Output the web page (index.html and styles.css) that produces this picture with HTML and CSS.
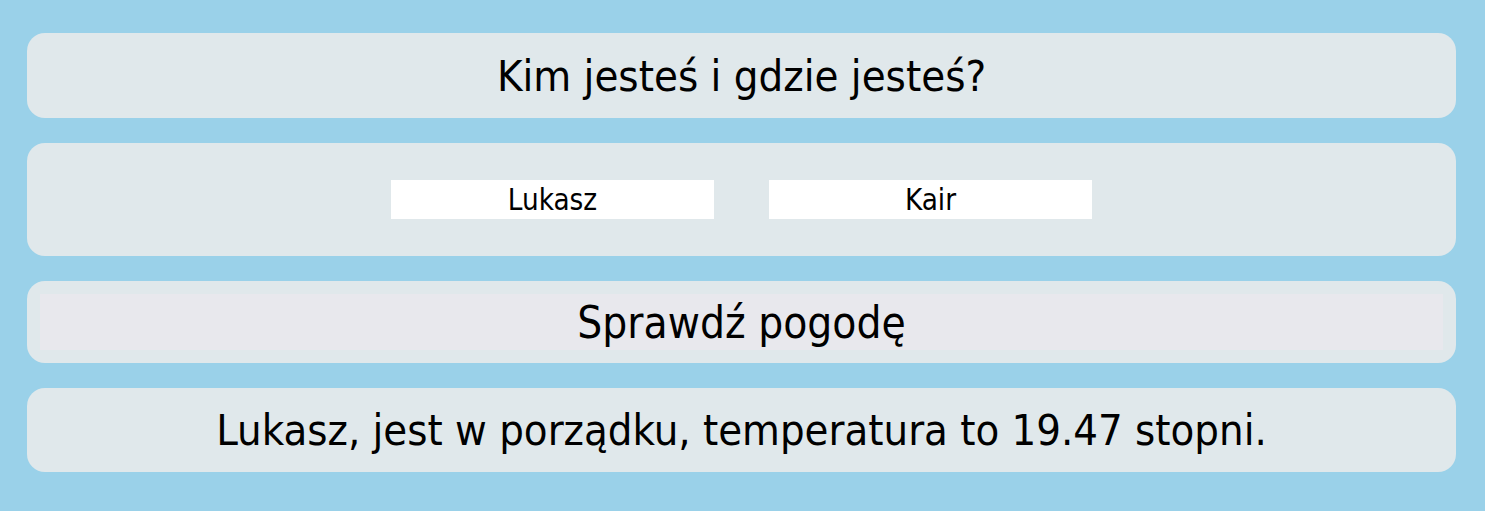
FILE: index.html
```html
<!DOCTYPE html>
<html lang="pl">
<head>
<meta charset="utf-8">
<title>Pogoda</title>
<link rel="stylesheet" href="styles.css">
</head>
<body>
<main class="app">
  <section class="card card-title">
    <h1 class="title">Kim jesteś i gdzie jesteś?</h1>
  </section>
  <section class="card card-inputs">
    <input class="field" type="text" value="Lukasz">
    <input class="field" type="text" value="Kair">
  </section>
  <section class="card card-button">
    <button class="btn" type="button">Sprawdź pogodę</button>
  </section>
  <section class="card card-result">
    <p class="result">Lukasz, jest w porządku, temperatura to 19.47 stopni.</p>
  </section>
</main>
</body>
</html>
```
FILE: styles.css
```css
html, body {
  margin: 0;
  padding: 0;
}
body {
  background: #9ad1e9;
  font-family: "DejaVu Sans Condensed", "DejaVu Sans", sans-serif;
  font-stretch: condensed;
  color: #000;
  width: 1485px;
  height: 511px;
  overflow: hidden;
}
.app {
  display: flex;
  flex-direction: column;
  gap: 25px;
  padding: 33px 29px 0 27px;
}
.card {
  background: #e0e8eb;
  border-radius: 18px;
  display: flex;
  align-items: center;
  justify-content: center;
}
.card-title {
  height: 85px;
}
.title {
  margin: 0;
  font-weight: normal;
  font-size: 43.3px;
  line-height: 1;
  padding-top: 2px;
}
.card-inputs {
  height: 113px;
  gap: 55px;
}
.field {
  width: 323px;
  height: 39px;
  box-sizing: border-box;
  border: none;
  background: #fff;
  font-family: inherit;
  font-stretch: condensed;
  font-size: 29.3px;
  text-align: center;
  padding: 0;
  color: #000;
  outline: none;
}
.card-button {
  height: 82px;
  padding: 13px;
  box-sizing: border-box;
}
.btn {
  width: 100%;
  height: 100%;
  border: none;
  border-radius: 0;
  background: #e8e8ed;
  font-family: inherit;
  font-stretch: condensed;
  font-size: 43.8px;
  color: #000;
  padding: 0;
}
.card-result {
  height: 84px;
}
.result {
  margin: 0;
  font-size: 43.2px;
  line-height: 1;
  padding-top: 2px;
}
```
